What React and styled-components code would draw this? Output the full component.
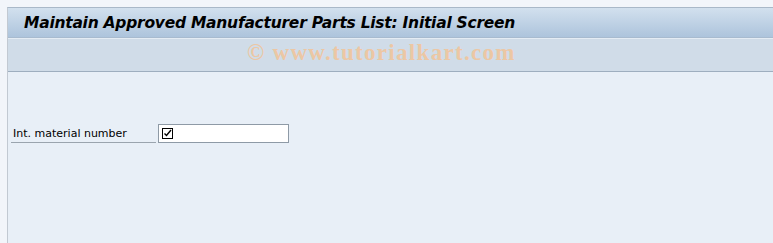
import React from "react";
import styled, { createGlobalStyle } from "styled-components";

const Global = createGlobalStyle`
  html, body {
    margin: 0;
    padding: 0;
    background: #f2f5fa;
  }
  #root {
    height: 243px;
    overflow: hidden;
  }
`;

const Frame = styled.div`
  height: 243px;
  padding: 7px 0 0 7px;
  box-sizing: border-box;
  display: flex;
  flex-direction: column;
`;

const Panel = styled.div`
  flex: 1;
  display: flex;
  flex-direction: column;
  border-left: 1px solid #c2c9d2;
  border-top: 1px solid #a9b8c8;
  background: #e8eff7;
`;

const TitleBar = styled.div`
  height: 29px;
  display: flex;
  align-items: center;
  padding-left: 16px;
  background: linear-gradient(#d2e0ee, #adc4dc);
  border-bottom: 1px solid #a8bbcf;
`;

const Title = styled.h1`
  margin: 0;
  font-family: "DejaVu Sans", Verdana, sans-serif;
  font-size: 15.5px;
  font-weight: bold;
  font-style: italic;
  color: #000;
  letter-spacing: -0.25px;
`;

const Toolbar = styled.div`
  height: 32px;
  display: flex;
  align-items: center;
  padding-left: 239px;
  background: #d0dce8;
  border-top: 1px solid #e4ecf4;
  border-bottom: 1px solid #9eaebf;
`;

const Watermark = styled.span`
  font-family: "Liberation Serif", "Times New Roman", serif;
  font-size: 23px;
  font-weight: bold;
  color: #ecc7a4;
  letter-spacing: 1.3px;
  margin-top: -4px;
`;

const Content = styled.div`
  padding: 52px 0 0 3px;
`;

const FieldRow = styled.div`
  display: flex;
  align-items: flex-end;
`;

const Label = styled.label`
  width: 145px;
  height: 19px;
  box-sizing: border-box;
  padding: 0 0 0 2px;
  border-bottom: 1px solid #9aa4ae;
  font-family: Tahoma, "DejaVu Sans", sans-serif;
  font-size: 11px;
  line-height: 20px;
  color: #000;
`;

const InputBox = styled.div`
  width: 131px;
  height: 19px;
  margin-left: 2px;
  box-sizing: border-box;
  background: #fff;
  border: 1px solid #8e9aa6;
  display: flex;
  align-items: center;
  padding-left: 3px;
`;

const CheckIcon = () => (
  <svg width="11" height="11" viewBox="0 0 11 11">
    <rect x="0.5" y="0.5" width="10" height="10" fill="none" stroke="#000" strokeWidth="1" />
    <path d="M2.5 5.5 L4.5 7.5 L9 2" fill="none" stroke="#000" strokeWidth="1.4" />
  </svg>
);

export default function App() {
  return (
    <>
      <Global />
      <Frame>
        <Panel>
          <TitleBar>
            <Title>Maintain Approved Manufacturer Parts List: Initial Screen</Title>
          </TitleBar>
          <Toolbar>
            <Watermark>© www.tutorialkart.com</Watermark>
          </Toolbar>
          <Content>
            <FieldRow>
              <Label>Int. material number</Label>
              <InputBox>
                <CheckIcon />
              </InputBox>
            </FieldRow>
          </Content>
        </Panel>
      </Frame>
    </>
  );
}
